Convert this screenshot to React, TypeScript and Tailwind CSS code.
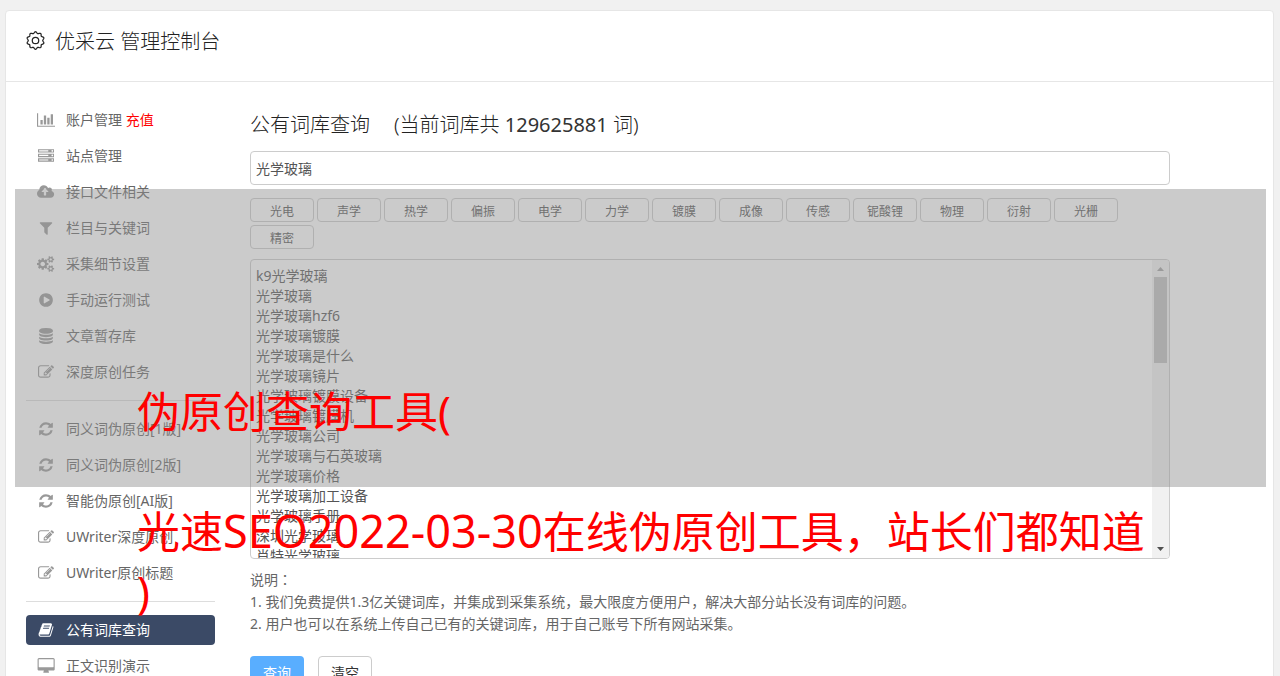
import { useState } from 'react'

type NavItem = {
  label: string
  icon: keyof typeof icons
  note?: string
  active?: boolean
}

const icons = {
  chart: { w: 2048, d: 'M640 896v512h-256v-512h256zm384-512v1024h-256v-1024h256zm1024 1152v128h-2048v-1536h128v1408h1920zm-640-896v768h-256v-768h256zm384-384v1152h-256v-1152h256z' },
  server: { w: 1792, d: 'M128 1408h1024v-128h-1024v128zm0-512h1024v-128h-1024v128zm1568 448q0-40-28-68t-68-28-68 28-28 68 28 68 68 28 68-28 28-68zm-1568-960h1024v-128h-1024v128zm1568 448q0-40-28-68t-68-28-68 28-28 68 28 68 68 28 68-28 28-68zm0-512q0-40-28-68t-68-28-68 28-28 68 28 68 68 28 68-28 28-68zm96 832v384h-1792v-384h1792zm0-512v384h-1792v-384h1792zm0-512v384h-1792v-384h1792z' },
  upload: { w: 1920, d: 'M1280 864q0-14-9-23l-352-352q-9-9-23-9t-23 9l-351 351q-10 12-10 24 0 14 9 23t23 9h224v352q0 13 9.5 22.5t22.5 9.5h192q13 0 22.5-9.5t9.5-22.5v-352h224q13 0 22.5-9.5t9.5-22.5zm640 288q0 159-112.5 271.5t-271.5 112.5h-1088q-185 0-316.5-131.5t-131.5-316.5q0-130 70-240t188-165q-2-30-2-43 0-212 150-362t362-150q156 0 285.5 87t188.5 231q71-62 166-62 106 0 181 75t75 181q0 76-41 138 130 31 213.5 135.5t83.5 238.5z' },
  filter: { w: 1792, d: 'M1595 295q17 41-14 70l-493 493v742q0 42-39 59-13 5-25 5-27 0-45-19l-256-256q-19-19-19-45v-486l-493-493q-31-29-14-70 17-39 59-39h1280q42 0 59 39z' },
  cogs: { w: 1920, d: 'M896 896q0-106-75-181t-181-75-181 75-75 181 75 181 181 75 181-75 75-181zm768 512q0-52-38-90t-90-38-90 38-38 90q0 53 37.5 90.5t90.5 37.5 90.5-37.5 37.5-90.5zm0-1024q0-52-38-90t-90-38-90 38-38 90q0 53 37.5 90.5t90.5 37.5 90.5-37.5 37.5-90.5zm-384 421v185q0 10-7 19.5t-16 10.5l-155 24q-11 35-32 76 34 48 90 115 7 11 7 20 0 12-7 19-23 30-82.5 89.5t-78.5 59.5q-11 0-21-7l-115-90q-37 19-77 31-11 108-23 155-7 24-30 24h-186q-11 0-20-7.5t-10-17.5l-23-153q-34-10-75-31l-118 89q-7 7-20 7-11 0-21-8-144-133-144-160 0-9 7-19 10-14 41-53t47-61q-23-44-35-82l-152-24q-10-1-17-9.5t-7-19.5v-185q0-10 7-19.5t16-10.5l155-24q11-35 32-76-34-48-90-115-7-11-7-20 0-12 7-20 22-30 82-89t79-59q11 0 21 7l115 90q34-18 77-32 11-108 23-154 7-24 30-24h186q11 0 20 7.5t10 17.5l23 153q34 10 75 31l118-89q8-7 20-7 11 0 21 8 144 133 144 160 0 8-7 19-12 16-42 54t-45 60q23 48 34 82l152 23q10 2 17 10.5t7 19.5zm640 533v140q0 16-149 31-12 27-30 52 51 113 51 138 0 4-4 7-122 71-124 71-8 0-46-47t-52-68q-20 2-30 2t-30-2q-14 21-52 68t-46 47q-2 0-124-71-4-3-4-7 0-25 51-138-18-25-30-52-149-15-149-31v-140q0-16 149-31 13-29 30-52-51-113-51-138 0-4 4-7 4-2 35-20t59-34 30-16q8 0 46 46.5t52 67.5q20-2 30-2t30 2q51-71 92-112l6-2q4 0 124 70 4 3 4 7 0 25-51 138 17 23 30 52 149 15 149 31zm0-1024v140q0 16-149 31-12 27-30 52 51 113 51 138 0 4-4 7-122 71-124 71-8 0-46-47t-52-68q-20 2-30 2t-30-2q-14 21-52 68t-46 47q-2 0-124-71-4-3-4-7 0-25 51-138-18-25-30-52-149-15-149-31v-140q0-16 149-31 13-29 30-52-51-113-51-138 0-4 4-7 4-2 35-20t59-34 30-16q8 0 46 46.5t52 67.5q20-2 30-2t30 2q51-71 92-112l6-2q4 0 124 70 4 3 4 7 0 25-51 138 17 23 30 52 149 15 149 31z' },
  play: { w: 1792, d: 'M896 128q209 0 385.5 103t279.5 279.5 103 385.5-103 385.5-279.5 279.5-385.5 103-385.5-103-279.5-279.5-103-385.5 103-385.5 279.5-279.5 385.5-103zm384 823q32-18 32-55t-32-55l-544-320q-31-19-64-1-32 19-32 56v640q0 37 32 56 16 8 32 8 17 0 32-9z' },
  database: { w: 1792, d: 'M896 768q237 0 443-43t325-127v170q0 69-103 128t-280 93.5-385 34.5-385-34.5-280-93.5-103-128v-170q119 84 325 127t443 43zm0 768q237 0 443-43t325-127v170q0 69-103 128t-280 93.5-385 34.5-385-34.5-280-93.5-103-128v-170q119 84 325 127t443 43zm0-384q237 0 443-43t325-127v170q0 69-103 128t-280 93.5-385 34.5-385-34.5-280-93.5-103-128v-170q119 84 325 127t443 43zm0-1152q208 0 385 34.5t280 93.5 103 128v128q0 69-103 128t-280 93.5-385 34.5-385-34.5-280-93.5-103-128v-128q0-69 103-128t280-93.5 385-34.5z' },
  edit: { w: 1792, d: 'M888 1184l116-116-152-152-116 116v56h96v96h56zm440-720q-16-16-33 1l-350 350q-17 17-1 33t33-1l350-350q17-17 1-33zm80 594v190q0 119-84.5 203.5t-203.5 84.5h-832q-119 0-203.5-84.5t-84.5-203.5v-832q0-119 84.5-203.5t203.5-84.5h832q63 0 117 25 15 7 18 23 3 17-9 29l-49 49q-14 14-32 8-23-6-45-6h-832q-66 0-113 47t-47 113v832q0 66 47 113t113 47h832q66 0 113-47t47-113v-126q0-13 9-22l64-64q15-15 35-7t20 29zm-96-738l288 288-672 672h-288v-288zm444 132l-92 92-288-288 92-92q28-28 68-28t68 28l152 152q28 28 28 68t-28 68z' },
  refresh: { w: 1792, d: 'M1639 1056q0 5-1 7-64 268-268 434.5t-478 166.5q-146 0-282.5-55t-243.5-157l-129 129q-19 19-45 19t-45-19-19-45v-448q0-26 19-45t45-19h448q26 0 45 19t19 45-19 45l-137 137q71 66 161 102t187 36q134 0 250-65t186-179q11-17 53-117 8-23 30-23h192q13 0 22.5 9.5t9.5 22.5zm25-800v448q0 26-19 45t-45 19h-448q-26 0-45-19t-19-45 19-45l138-138q-148-137-349-137-134 0-250 65t-186 179q-11 17-53 117-8 23-30 23h-199q-13 0-22.5-9.5t-9.5-22.5v-7q65-268 270-434.5t480-166.5q146 0 284 55.5t245 156.5l130-129q19-19 45-19t45 19 19 45z' },
  book: { w: 1792, d: 'M1703 478q40 57 18 129l-275 906q-19 64-76.5 107.5t-122.5 43.5h-923q-77 0-148.5-53.5t-99.5-131.5q-24-67-2-127 0-4 3-27t4-37q1-8-3-21.5t-3-19.5q2-11 8-21t16.5-23.5 16.5-23.5q23-38 45-91.5t30-91.5q3-10 .5-30t-.5-28q3-11 17-28t17-23q21-36 42-92t25-90q1-9-2.500-32t.5-28q4-13 22-30.5t22-22.5q19-26 42.5-84.5t27.5-96.5q1-8-3-25.5t-2-26.5q2-8 9-18t18-23 17-21q8-12 16.5-30.5t15-35 16-36 19.5-32 26.5-23.5 36-11.5 47.5 5.5l-1 3q38-9 51-9h761q74 0 114 56t18 130l-274 906q-36 119-71.5 153.5t-128.5 34.5h-869q-27 0-38 15-11 16-1 43 24 70 144 70h923q29 0 56-15.5t35-41.5l300-987q7-22 5-57 38 15 59 43zm-1064 2q-4 13 2 22.5t20 9.5h608q13 0 25.5-9.5t16.5-22.5l21-64q4-13-2-22.5t-20-9.5h-608q-13 0-25.5 9.5t-16.5 22.5zm-83 256q-4 13 2 22.5t20 9.5h608q13 0 25.5-9.5t16.5-22.5l21-64q4-13-2-22.5t-20-9.5h-608q-13 0-25.5 9.5t-16.5 22.5z' },
  desktop: { w: 1984, d: 'M1856 992v-832q0-13-9.5-22.5t-22.5-9.5h-1600q-13 0-22.5 9.5t-9.5 22.5v832q0 13 9.5 22.5t22.5 9.5h1600q13 0 22.5-9.5t9.5-22.5zm128-832v1088q0 66-47 113t-113 47h-544q0 37 16 77.5t32 71 16 43.5q0 26-19 45t-45 19h-512q-26 0-45-19t-19-45q0-14 16-44t32-70 16-78h-544q-66 0-113-47t-47-113v-1088q0-66 47-113t113-47h1600q66 0 113 47t47 113z' },
}

const navGroups: NavItem[][] = [
  [
    { label: '账户管理', icon: 'chart', note: '充值' },
    { label: '站点管理', icon: 'server' },
    { label: '接口文件相关', icon: 'upload' },
    { label: '栏目与关键词', icon: 'filter' },
    { label: '采集细节设置', icon: 'cogs' },
    { label: '手动运行测试', icon: 'play' },
    { label: '文章暂存库', icon: 'database' },
    { label: '深度原创任务', icon: 'edit' },
  ],
  [
    { label: '同义词伪原创[1版]', icon: 'refresh' },
    { label: '同义词伪原创[2版]', icon: 'refresh' },
    { label: '智能伪原创[AI版]', icon: 'refresh' },
    { label: 'UWriter深度原创', icon: 'edit' },
    { label: 'UWriter原创标题', icon: 'edit' },
  ],
  [
    { label: '公有词库查询', icon: 'book', active: true },
    { label: '正文识别演示', icon: 'desktop' },
  ],
]

const tags = ['光电', '声学', '热学', '偏振', '电学', '力学', '镀膜', '成像', '传感', '铌酸锂', '物理', '衍射', '光栅', '精密']

const results = [
  'k9光学玻璃',
  '光学玻璃',
  '光学玻璃hzf6',
  '光学玻璃镀膜',
  '光学玻璃是什么',
  '光学玻璃镜片',
  '光学玻璃镀膜设备',
  '光学玻璃镀膜机',
  '光学玻璃公司',
  '光学玻璃与石英玻璃',
  '光学玻璃价格',
  '光学玻璃加工设备',
  '光学玻璃手册',
  '深圳光学玻璃',
  '肖特光学玻璃',
].join('\n')

function NavIcon({ name }: { name: keyof typeof icons }) {
  const icon = icons[name]
  return (
    <span className="w-10 flex justify-center shrink-0">
      <svg viewBox={`0 0 ${icon.w} 1792`} className="h-4 w-auto" fill="currentColor" aria-hidden="true">
        <path d={icon.d} />
      </svg>
    </span>
  )
}

// closed outline with ten rounded teeth
const gearPath = Array.from({ length: 120 }, (_, i) => {
  const a = (i / 120) * Math.PI * 2
  const r = 8.4 + 0.8 * Math.cos(10 * a)
  return `${i ? 'L' : 'M'}${(10 + r * Math.sin(a)).toFixed(2)} ${(10 - r * Math.cos(a)).toFixed(2)}`
}).join('') + 'Z'

function GearIcon() {
  return (
    <svg viewBox="0 0 20 20" className="w-[19px] h-[19px]" fill="none" stroke="currentColor" strokeWidth="1.3" aria-hidden="true">
      <path d={gearPath} />
      <circle cx="10" cy="10" r="3.4" />
    </svg>
  )
}

export default function App() {
  const [keyword, setKeyword] = useState('光学玻璃')
  const [list, setList] = useState(results)

  return (
    <div className="relative h-screen overflow-hidden bg-[#f1f1f1] pl-[5px] pr-1.5 pt-2.5 text-sm text-[#555] font-['Noto_Sans','Noto_Sans_CJK_SC',sans-serif]">
      <div className="min-h-full bg-white border border-[#e6e6e6] rounded-[4px]">
        <header className="h-[71px] border-b border-[#e6e6e6] flex items-start gap-2.5 pl-5 pt-4 text-[#222]">
          <span className="pt-1"><GearIcon /></span>
          <h1 className="text-xl leading-[30px] font-light">优采云 管理控制台</h1>
        </header>

        <div className="flex items-start pl-5">
          <nav className="w-[189px] shrink-0 pt-[23px]">
            {navGroups.map((group, i) => (
              <ul key={i} className={`space-y-1.5 ${i > 0 ? 'mt-[13px] pt-[13px] border-t border-[#ddd]' : ''}`}>
                {group.map(item => (
                  <li key={item.label}>
                    <a
                      href="#"
                      className={`flex items-center h-[30px] rounded-[4px] ${item.active ? 'bg-[#3b4a66] text-white' : 'text-[#999]'}`}
                    >
                      <NavIcon name={item.icon} />
                      <span className={item.active ? 'text-white' : 'text-[#666]'}>
                        {item.label}
                        {item.note && <span className="text-[#f00]"> {item.note}</span>}
                      </span>
                    </a>
                  </li>
                ))}
              </ul>
            ))}
          </nav>

          <main className="w-[920px] ml-[35px] pt-7">
            <h2 className="flex gap-6 text-xl leading-[30px] text-[#222] font-light">
              <span>公有词库查询</span>
              <span>(当前词库共 <span className="font-normal text-[#333]">129625881</span> 词)</span>
            </h2>

            <input
              aria-label="关键词"
              value={keyword}
              onChange={e => setKeyword(e.target.value)}
              className="block w-full h-[34px] mt-[11px] px-[5px] border border-[#ccc] rounded-[4px] bg-white focus:outline-none"
            />

            <div className="flex flex-wrap gap-[3px] mt-[13px]">
              {tags.map(tag => (
                <button
                  key={tag}
                  type="button"
                  onClick={() => setKeyword(tag)}
                  className="w-16 h-6 pt-1 border border-[#ccc] rounded-[4px] bg-white text-xs leading-[18px]"
                >
                  {tag}
                </button>
              ))}
            </div>

            <div className="flex h-[300px] mt-2.5 border border-[#ccc] rounded-[4px] bg-white overflow-hidden">
              <textarea
                aria-label="查询结果"
                value={list}
                onChange={e => setList(e.target.value)}
                className="flex-1 h-full pl-[5px] pt-1.5 leading-5 resize-none overflow-hidden focus:outline-none"
              />
              {/* Scrollbar */}
              <div className="w-[17px] flex flex-col items-center bg-[#f1f1f1]" aria-hidden="true">
                <svg viewBox="0 0 17 17" className="w-[17px] h-[17px] shrink-0"><path d="M5 11h7L8.500 7z" fill="#a3a3a3" /></svg>
                <div className="w-[13px] h-[86px] bg-[#c1c1c1]" />
                <svg viewBox="0 0 17 17" className="w-[17px] h-[17px] mt-auto shrink-0"><path d="M5 6h7L8.500 10z" fill="#505050" /></svg>
              </div>
            </div>

            <div className="mt-2.5 leading-[22px] text-[#666]">
              {/* Traditional face keeps the colon in the middle of its square */}
              <p>说明<span lang="zh-TW" className="leading-none font-['Noto_Sans_CJK_TC',sans-serif]">：</span></p>
              <p>1. 我们免费提供1.3亿关键词库，并集成到采集系统，最大限度方便用户，解决大部分站长没有词库的问题。</p>
              <p>2. 用户也可以在系统上传自己已有的关键词库，用于自己账号下所有网站采集。</p>
            </div>

            <div className="flex gap-3.5 mt-[21px]">
              <button type="button" className="w-[54px] h-[34px] rounded-[4px] bg-[#59aeff] text-white">查询</button>
              <button
                type="button"
                onClick={() => setList('')}
                className="w-[54px] h-[34px] rounded-[4px] border border-[#ccc] bg-white text-[#333]"
              >
                清空
              </button>
            </div>
          </main>
        </div>
      </div>

      {/* Caption laid over the console */}
      <div className="absolute z-10 left-[15px] right-3.5 top-[189px] h-[298px] px-[122px] pt-[193px] bg-[#919191]/47 pointer-events-none">
        <p className="text-[43px] leading-[60px] text-[#f00] whitespace-nowrap">
          伪原创查询工具(
          <br />
          <br />
          光速<span className="text-[45px] leading-none">SEO2022-03-30</span>在线伪原创工具，站长们都知道
          <br />
          )
        </p>
      </div>
    </div>
  )
}
